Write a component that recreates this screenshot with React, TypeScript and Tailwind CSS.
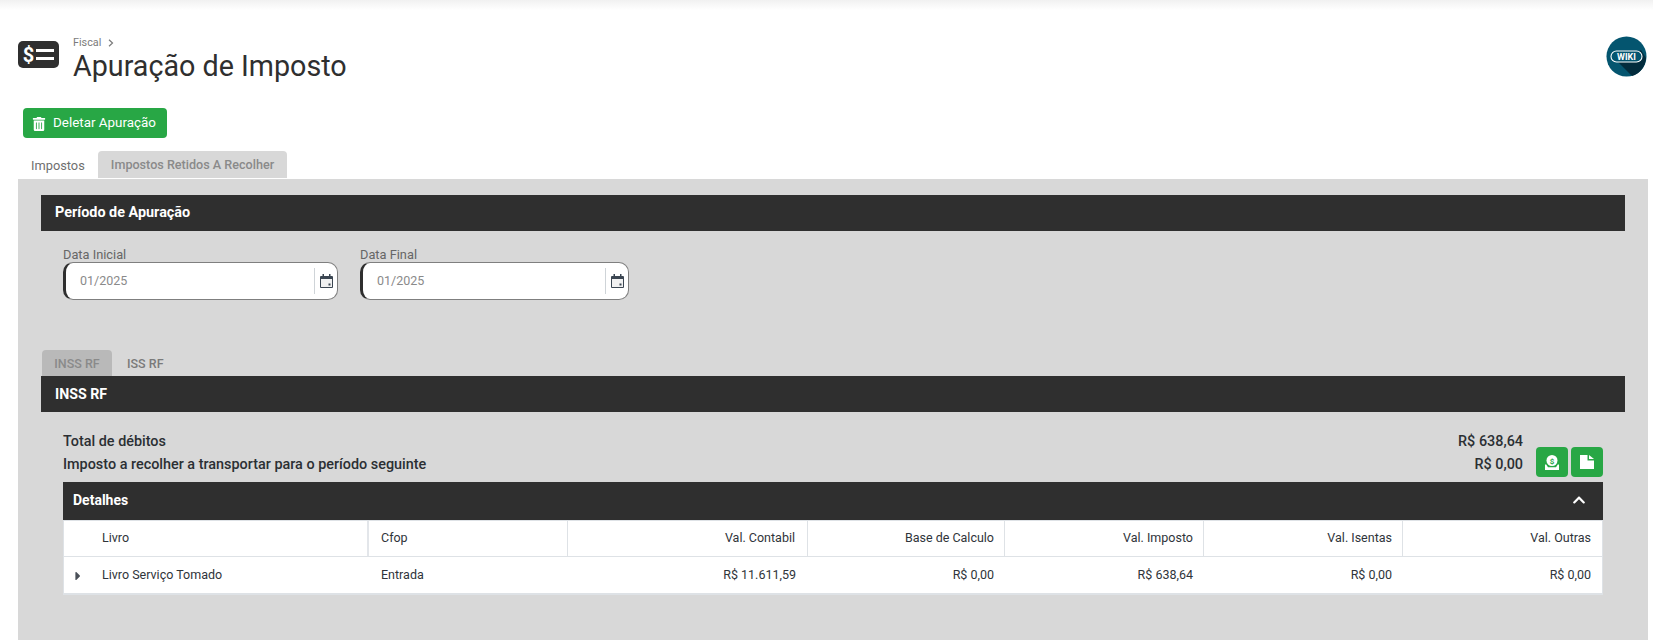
import { FaTrashAlt, FaChevronUp, FaCaretRight } from "react-icons/fa";

const font = { fontFamily: "Roboto, sans-serif" };

function CalendarIcon() {
  return (
    <svg width="13" height="14" viewBox="0 0 13 14" className="text-[#3b4652]">
      <path fill="currentColor" d="M1 2h1.500V0H4v2h5V0h1.500v2H12a1 1 0 0 1 1 1v10a1 1 0 0 1-1 1H1a1 1 0 0 1-1-1V3a1 1 0 0 1 1-1z" />
      <rect x="1" y="5" width="11" height="8" fill="#f1f1f1" />
      <rect x="8.500" y="9.500" width="2" height="2" fill="currentColor" />
    </svg>
  );
}

function DateField({ label, width }: { label: string; width: string }) {
  return (
    <div className={width}>
      <label className="block text-[12.800px] leading-[16px] text-[#666] h-[15px]">{label}</label>
      <div className="flex items-center h-[38px] bg-white rounded-[10px] border border-[#7f7f7f] border-l-[3px] border-l-[#2f2f2f]">
        <span className="flex-1 pl-[14px] text-[12.500px] text-[#8a8a8a]">01/2025</span>
        <div className="flex items-center justify-center w-[23px] h-[26px] border-l border-[#cfd4d8]">
          <CalendarIcon />
        </div>
      </div>
    </div>
  );
}

const rowGrid = "grid grid-cols-[305px_199px_240px_197px_199px_199px_201px]";
const cols = ["Val. Contabil", "Base de Calculo", "Val. Imposto", "Val. Isentas", "Val. Outras"];
const colPad = ["pr-[12px]", "pr-[10px]", "pr-[10px]", "pr-[10px]", "pr-[13px]"];
const vals = ["R$ 11.611,59", "R$ 0,00", "R$ 638,64", "R$ 0,00", "R$ 0,00"];
const valPad = ["pr-[12px]", "pr-[11px]", "pr-[11px]", "pr-[11px]", "pr-[13px]"];

export default function App() {
  return (
    <div style={font} className="relative h-[640px] overflow-hidden bg-white flex flex-col text-[#2f2f2f]">
      <div className="absolute top-0 left-0 right-0 h-[10px] bg-gradient-to-b from-[#f1f1f1] to-white" />

      <div className="flex items-start justify-between pt-[36px] pl-[18px] pr-[6px] h-[108px]">
        <div className="flex items-start">
          <div className="mt-[5px] w-[41px] h-[27px] rounded-[5px] bg-[#2f2f2f] flex items-center justify-center gap-[2px] text-white">
            <span className="text-[20px] font-bold leading-none">$</span>
            <div className="flex flex-col gap-[5px]">
              <div className="w-[18px] h-[3px] bg-white" />
              <div className="w-[18px] h-[3px] bg-white" />
            </div>
          </div>
          <div className="ml-[14px]">
            <div className="flex items-center gap-[7px] text-[10.800px] leading-[13px] text-[#7b7b7b]">
              <span>Fiscal</span>
              <svg width="6" height="8" viewBox="0 0 6 8" fill="none" stroke="#7b7b7b" strokeWidth="1.200">
                <path d="M1 .8 4.500 4 1 7.200" />
              </svg>
            </div>
            <h1 className="text-[28.700px] leading-[35px] font-normal text-[#2f2f2f]">Apuração de Imposto</h1>
          </div>
        </div>
        <svg width="41" height="41" viewBox="0 0 41 41">
          <circle cx="20.500" cy="20.500" r="20" fill="#04556f" />
          <path d="M12 26 35 14 40 22 A20 20 0 0 1 26 40Z" fill="#032c3d" />
          <rect x="5" y="15" width="31" height="11" rx="5.500" fill="#04556f" stroke="#fff" strokeWidth="1.100" />
          <text x="20.500" y="23.800" textAnchor="middle" fontSize="9" fontWeight="700" fill="#fff" fontFamily="Roboto, sans-serif">WIKI</text>
        </svg>
      </div>

      <div className="pl-[23px]">
        <button className="flex items-center gap-[7px] h-[30px] w-[144px] pl-[9px] pt-px rounded bg-[#28a745] text-white text-[13.400px]">
          <FaTrashAlt size={14} />
          Deletar Apuração
        </button>
      </div>

      <div className="flex items-end h-[28px] mt-[13px] ml-[18px] pb-px text-[12.800px]">
        <div className="w-[80px] pl-[13px] pt-px h-[26px] flex items-center text-[#6f6f6f]">Impostos</div>
        <div className="w-[189px] h-[27px] pt-px flex items-center justify-center rounded-t bg-[#d8d8d8] font-medium text-[12.600px] text-[#8a8a8a]">
          Impostos Retidos A Recolher
        </div>
      </div>

      <div className="flex-1 ml-[18px] mr-[5px] bg-[#d8d8d8] pl-[23px] pr-[23px] pt-[16px]">
        <div className="h-9 bg-[#2f2f2f] flex items-center pl-[14px] pb-px text-[14.400px] font-bold text-white">Período de Apuração</div>

        <div className="flex gap-[22px] pl-[22px] pt-[16px] h-[119px]">
          <DateField label="Data Inicial" width="w-[275px]" />
          <DateField label="Data Final" width="w-[269px]" />
        </div>

        <div className="flex h-[26px] text-[12.500px] font-medium">
          <div className="w-[70px] pt-[2px] rounded-t bg-[#b9b9b9] text-[#8a8a8a] flex items-center justify-center ml-[1px]">INSS RF</div>
          <div className="pl-[15px] pt-[2px] flex items-center text-[#7a7a7a]">ISS RF</div>
        </div>
        <div className="h-9 bg-[#2f2f2f] flex items-center pl-[14px] pt-px text-[14.200px] font-bold text-white">INSS RF</div>

        <div className="pl-[22px] pr-[22px]">
          <div className="relative h-[70px]">
            <div className="flex justify-between pr-[80px] pt-[18px] text-[14.400px] leading-[23px] font-medium text-[#2b2f33]">
              <span>Total de débitos</span>
              <span>R$ 638,64</span>
            </div>
            <div className="flex justify-between pr-[80px] text-[14.400px] leading-[23px] font-medium text-[#2b2f33]">
              <span>Imposto a recolher a transportar para o período seguinte</span>
              <span>R$ 0,00</span>
            </div>
            <div className="absolute right-0 top-[35px] flex gap-[3px]">
              <button className="w-[32px] h-[30px] rounded bg-[#28a745] flex items-center justify-center">
                <svg width="16" height="15" viewBox="0 0 16 15">
                  <circle cx="8" cy="5.500" r="5.500" fill="#fff" />
                  <text x="8" y="8.500" textAnchor="middle" fontSize="8" fontWeight="700" fill="#28a745" fontFamily="Roboto, sans-serif">$</text>
                  <path d="M1 9.500h1.200L4 12.200h8l1.800-2.700H15V15H1z" fill="#fff" />
                </svg>
              </button>
              <button className="w-[32px] h-[30px] rounded bg-[#28a745] flex items-center justify-center">
                <svg width="14" height="14" viewBox="0 0 14 14">
                  <path d="M0 0h7.500v5.500H14V14H0z" fill="#fff" />
                  <path d="M9 0l5 4H9z" fill="#fff" />
                </svg>
              </button>
            </div>
          </div>

          <div className="h-[38px] bg-[#2f2f2f] flex items-center justify-between pl-[10px] pr-[17px] pb-[2px] text-sm font-bold text-white">
            <span>Detalhes</span>
            <FaChevronUp size={14} />
          </div>

          <div className="bg-white border-x border-b-2 border-[#dee2e6] text-[12.500px] text-[#2f343a]">
            <div className={`${rowGrid} h-[37px] border-t border-b border-[#dee2e6] items-stretch`}>
              <div className="flex items-center pl-[38px] border-r-2 border-[#e3e6ea]">Livro</div>
              <div className="flex items-center pl-[12px] border-r border-[#dee2e6]">Cfop</div>
              {cols.map((c, i) => (
                <div key={c} className={`flex items-center justify-end ${colPad[i]} ${i < 4 ? "border-r border-[#dee2e6]" : ""}`}>{c}</div>
              ))}
            </div>
            <div className={`${rowGrid} h-[36px] items-center pt-px`}>
              <div className="flex items-center">
                <div className="w-[38px] flex justify-center pr-[10px]">
                  <FaCaretRight size={14} className="text-[#4a5058]" />
                </div>
                <span>Livro Serviço Tomado</span>
              </div>
              <div className="pl-[12px]">Entrada</div>
              {vals.map((v, i) => (
                <div key={i} className={`text-right ${valPad[i]}`}>{v}</div>
              ))}
            </div>
          </div>
        </div>
      </div>
    </div>
  );
}
